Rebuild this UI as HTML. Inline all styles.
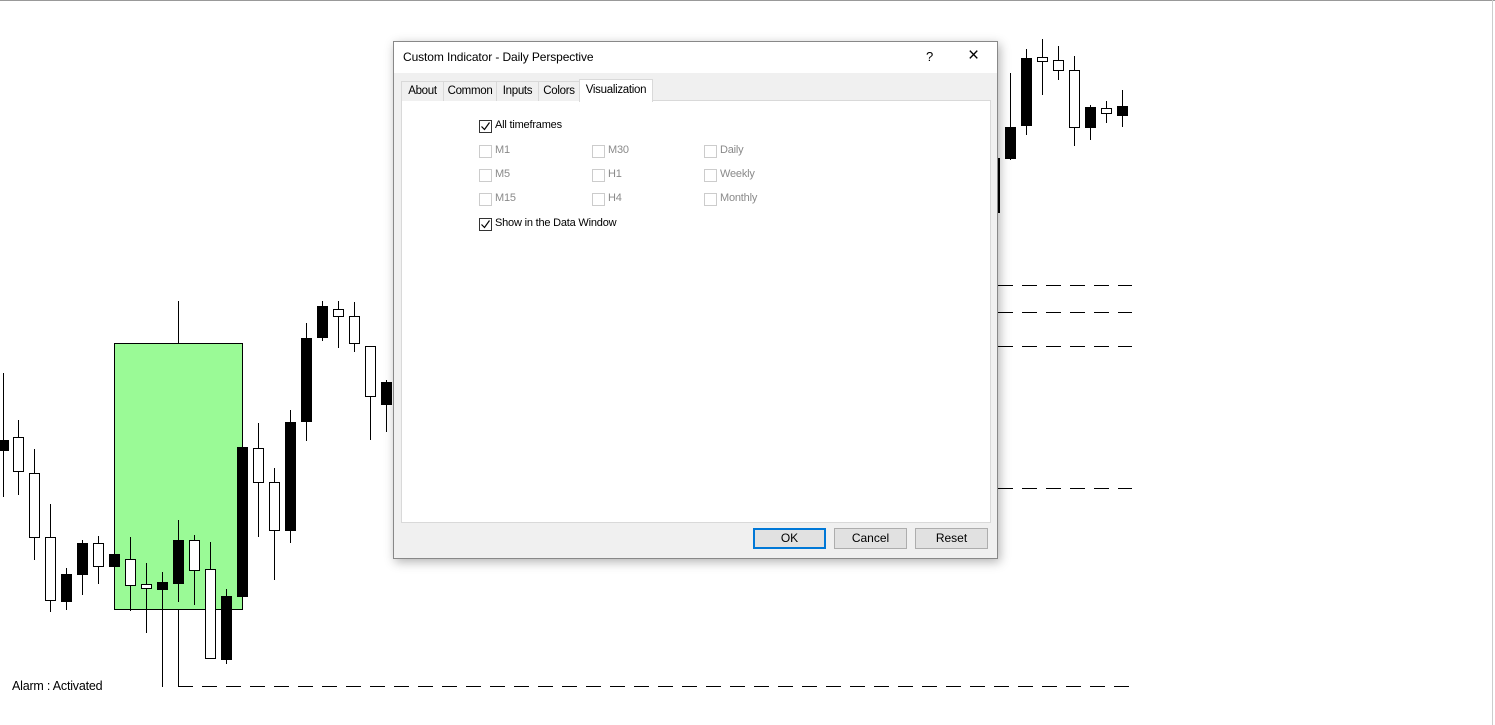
<!DOCTYPE html><html><head><style>
body{margin:0;width:1495px;height:725px;background:#fff;position:relative;overflow:hidden;font-family:"Liberation Sans",sans-serif}
.dlg{position:absolute;left:393px;top:41px;width:603px;height:516px;background:#f0f0f0;border:1px solid #888;box-shadow:2px 3px 10px rgba(0,0,0,.3)}
.tb{position:absolute;left:0;top:0;width:603px;height:31px;background:#fff;font-size:12px}
.tab{position:absolute;top:39px;height:19px;font-size:11.5px;letter-spacing:-0.3px;border:1px solid #d9d9d9;border-bottom:none;background:#f0f0f0;line-height:19px;text-align:center;color:#000}
.panel{position:absolute;left:7px;top:58px;width:588px;height:421px;background:#fff;border:1px solid #d9d9d9}
.cb{position:absolute;font-size:11px;letter-spacing:-0.2px;color:#000;line-height:13px}
.cb i{position:absolute;left:-16px;top:1px;width:11px;height:11px;border:1px solid #333;background:#fff}
.cb.d{color:#8a8a8a}.cb.d i{border-color:#ccc}
.cb svg{position:absolute;left:-15px;top:2px}
.btn{position:absolute;top:486px;width:71px;height:19px;border:1px solid #adadad;background:#e1e1e1;font-size:12px;text-align:center;line-height:19px}
</style></head><body>
<div style="position:absolute;left:0;top:0;width:1495px;height:1px;background:#999"></div>
<div style="position:absolute;left:1492px;top:0;width:1px;height:725px;background:#ccc"></div>
<svg width="1495" height="725" style="position:absolute;left:0;top:0" shape-rendering="crispEdges">
<g stroke="#000" stroke-width="1.3">
<rect x="114.5" y="343.5" width="128" height="266" fill="#9afa96"/>
<line x1="178.5" y1="301" x2="178.5" y2="343"/>
<line x1="178.5" y1="609" x2="178.5" y2="686.5"/>
<g stroke-dasharray="15,9"><line x1="178" y1="686.5" x2="1132" y2="686.5"/>
<line x1="998" y1="285.5" x2="1132" y2="285.5"/><line x1="998" y1="312.5" x2="1132" y2="312.5"/><line x1="998" y1="346.5" x2="1132" y2="346.5"/><line x1="998" y1="488.5" x2="1132" y2="488.5"/></g>
</g>
<g id="c" stroke="#000" stroke-width="1.3"></g>
</svg>
<script>
var C=[[3,373,497,440,450,1],[18,420,495,437,471,0],[34,449,560,473,537,0],[50,504,612,537,600,0],[66,568,610,574,601,1],[82,540,595,543,574,1],[98,536,584,543,566,0],[114,554,566,554,566,1],[130,537,611,559,585,0],[146,563,633,584,588,0],[162,572,687,582,589,1],[178,520,602,540,583,1],[194,535,605,540,570,0],[210,542,659,569,658,0],[226,589,664,596,659,1],[242,447,596,447,596,1],[258,423,537,448,482,0],[274,468,580,482,530,0],[290,410,543,422,530,1],[306,323,441,338,421,1],[322,301,341,306,337,1],[338,301,348,309,316,0],[354,302,352,316,343,0],[370,346,440,346,396,0],[386,380,432,382,404,1],
[1010,73,160,127,158,1],[1026,49,135,58,125,1],[1042,39,95,57,61,0],[1058,46,80,60,70,0],[1074,56,146,70,127,0],[1090,105,140,107,127,1],[1106,101,123,108,113,0],[1122,90,127,106,115,1],[999,158,213,158,213,1]];
var s='';C.forEach(function(c){var x=c[0];if(x==999){s+='<rect x="997" y="158" width="3" height="55" fill="#000" stroke="none"/>';return;}
s+='<line x1="'+(x+.5)+'" y1="'+c[1]+'" x2="'+(x+.5)+'" y2="'+c[2]+'"/>';
s+='<rect x="'+(x-4.5)+'" y="'+(c[3]+.5)+'" width="10" height="'+(c[4]-c[3])+'" fill="'+(c[5]?'#000':'#fff')+'"/>';});
document.getElementById('c').innerHTML=s;
</script>
<div style="position:absolute;left:12px;top:679px;font-size:12.5px;letter-spacing:-0.2px">Alarm : Activated</div>
<div class="dlg">
<div class="tb"><span style="position:absolute;left:9px;top:8px;letter-spacing:-0.1px">Custom Indicator - Daily Perspective</span>
<span style="position:absolute;left:532px;top:7px;font-size:13px">?</span>
<span style="position:absolute;left:574px;top:3px;font-size:19px;font-weight:300">×</span></div>
<div class="panel"></div>
<div class="tab" style="left:7px;width:41px">About</div>
<div class="tab" style="left:49px;width:52px">Common</div>
<div class="tab" style="left:102px;width:41px">Inputs</div>
<div class="tab" style="left:144px;width:40px">Colors</div>
<div class="tab" style="left:185px;top:37px;width:72px;height:22px;background:#fff;line-height:20px">Visualization</div>
<div class="cb" style="left:101px;top:77px"><i></i><svg width="11" height="11"><path d="M1.5 5.5 L4.5 8.5 L9.5 1.5" fill="none" stroke="#000" stroke-width="1.2"/></svg>All timeframes</div>
<div class="cb d" style="left:101px;top:102px"><i></i>M1</div>
<div class="cb d" style="left:101px;top:126px"><i></i>M5</div>
<div class="cb d" style="left:101px;top:150px"><i></i>M15</div>
<div class="cb d" style="left:214px;top:102px"><i></i>M30</div>
<div class="cb d" style="left:214px;top:126px"><i></i>H1</div>
<div class="cb d" style="left:214px;top:150px"><i></i>H4</div>
<div class="cb d" style="left:326px;top:102px"><i></i>Daily</div>
<div class="cb d" style="left:326px;top:126px"><i></i>Weekly</div>
<div class="cb d" style="left:326px;top:150px"><i></i>Monthly</div>
<div class="cb" style="left:101px;top:175px"><i></i><svg width="11" height="11"><path d="M1.5 5.5 L4.5 8.5 L9.5 1.5" fill="none" stroke="#000" stroke-width="1.2"/></svg>Show in the Data Window</div>
<div class="btn" style="left:359px;border:2px solid #0078d7;width:69px;height:17px;line-height:17px">OK</div>
<div class="btn" style="left:440px">Cancel</div>
<div class="btn" style="left:521px">Reset</div>
</div>
</body></html>
